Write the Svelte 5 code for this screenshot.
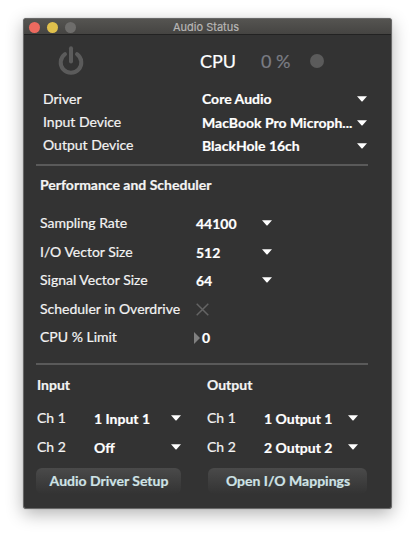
<script lang="ts">
  const devices = [
    { label: 'Driver', value: 'Core Audio' },
    { label: 'Input Device', value: 'MacBook Pro Microph...' },
    { label: 'Output Device', value: 'BlackHole 16ch' },
  ]

  const settings = [
    { label: 'Sampling Rate', value: '44100' },
    { label: 'I/O Vector Size', value: '512' },
    { label: 'Signal Vector Size', value: '64' },
  ]

  const groups = [
    {
      title: 'Input',
      channels: ['1 Input 1', 'Off'],
      action: 'Audio Driver Setup',
    },
    {
      title: 'Output',
      channels: ['1 Output 1', '2 Output 2'],
      action: 'Open I/O Mappings',
    },
  ]
</script>

{#snippet arrow()}
  <svg class="arrow" width="10" height="6" viewBox="0 0 10 6"
    ><path d="M0 0.3H10L5.6 5.3Q5 5.8 4.4 5.3Z" fill="#fff" /></svg
  >
{/snippet}

<div class="desktop">
  <main class="window">
    <header>
      <div class="lights">
        <span class="close"></span>
        <span class="minimise"></span>
        <span class="zoom"></span>
      </div>
      <h1>Audio Status</h1>
    </header>

    <div class="status">
      <svg
        class="power"
        width="26"
        height="30"
        viewBox="0 0 26 30"
        fill="none"
        stroke="#5b5b5b"
        stroke-width="4"
        stroke-linecap="round"
        ><path d="M7 8.2A10.3 10.3 0 1 0 19 8.2" /><path d="M13 2.2V15.6" /></svg
      >
      <span class="cpu">CPU</span>
      <span class="load">0 %</span>
      <span class="dot"></span>
    </div>

    <section class="devices">
      {#each devices as device}
        <div class="row">
          <span class="label">{device.label}</span>
          <span class="value">{device.value}</span>
          {@render arrow()}
        </div>
      {/each}
    </section>

    <hr />

    <section class="scheduler">
      <h2>Performance and Scheduler</h2>
      {#each settings as setting}
        <div class="row">
          <span class="label">{setting.label}</span>
          <span class="value">{setting.value}</span>
          {@render arrow()}
        </div>
      {/each}
      <div class="row">
        <span class="label">Scheduler in Overdrive</span>
        <svg
          class="cross"
          width="13"
          height="13"
          viewBox="0 0 13 13"
          stroke="#646464"
          stroke-width="1.5"><path d="M0.7 0.7L12.3 12.3M12.3 0.7L0.7 12.3" /></svg
        >
      </div>
      <div class="row">
        <span class="label">CPU % Limit</span>
        <span class="value limit"
          ><svg width="6" height="12" viewBox="0 0 6 12"
            ><path d="M0 0L6 6L0 12Z" fill="#808080" /></svg
          >0</span
        >
      </div>
    </section>

    <hr />

    <div class="groups">
      {#each groups as group}
        <section class="group">
          <h2>{group.title}</h2>
          {#each group.channels as channel, i}
            <div class="row">
              <span class="label">Ch {i + 1}</span>
              <span class="value">{channel}</span>
              {@render arrow()}
            </div>
          {/each}
          <button type="button">{group.action}</button>
        </section>
      {/each}
    </div>
  </main>
</div>

<style>
  .desktop {
    box-sizing: border-box;
    height: 535px;
    padding: 18px 0 0 22.5px;
    overflow: hidden;
    background: #fff;
  }
  .window {
    box-sizing: border-box;
    width: 369px;
    height: 491px;
    overflow: hidden;
    border: 1px solid #686868;
    border-radius: 3px;
    background: #333;
    box-shadow:
      0 0 1px rgba(0, 0, 0, 0.45),
      0 5px 17px rgba(0, 0, 0, 0.3);
    color: #f4f4f4;
    font-family: Lato, 'Liberation Sans', sans-serif;
    font-size: 14px;
    line-height: 20px;
    white-space: nowrap;
    -webkit-text-stroke: 0.2px;
  }
  header {
    display: grid;
    grid-template-columns: 67px 1fr 69px;
    align-items: center;
    box-sizing: border-box;
    height: 16px;
    border-bottom: 1px solid #222;
    background: linear-gradient(#555451, #454442);
  }
  .lights {
    display: flex;
    gap: 7px;
    padding-left: 5.5px;
  }
  .lights span {
    width: 11px;
    height: 11px;
    border-radius: 50%;
  }
  .close {
    background: #ed6a5f;
  }
  .minimise {
    background: #e0c04c;
  }
  .zoom {
    background: #6e6d6b;
  }
  h1 {
    margin: 0;
    padding-top: 1px;
    color: #b7b6b5;
    font-family: Inter, sans-serif;
    font-size: 11px;
    font-weight: 400;
    line-height: 15px;
    text-align: center;
  }

  .status {
    display: flex;
    align-items: center;
    height: 52.5px;
    padding-left: 34.5px;
  }
  .power {
    margin-right: 116px;
  }
  .cpu,
  .load {
    font-size: 18px;
  }
  .cpu {
    width: 61px;
    color: #fff;
  }
  .load {
    width: 49px;
    color: #7b7d84;
  }
  .dot {
    width: 14px;
    height: 14px;
    border-radius: 50%;
    background: #5b5b5b;
  }

  .row {
    display: grid;
    align-items: center;
  }
  .value {
    color: #fff;
    font-weight: 700;
  }
  .devices .row {
    grid-template-columns: 159px 155px auto;
    justify-content: start;
    height: 23.4px;
    padding-left: 19.5px;
  }
  .devices .row + .row .label {
    padding-bottom: 1px;
  }
  hr {
    width: 332px;
    height: 2px;
    margin: 0 0 0 12.5px;
    border: 0;
    background: #5a5a5a;
  }
  .devices + hr {
    margin-top: 6.3px;
  }
  h2 {
    margin: 0;
    font-size: 14px;
    font-weight: 700;
    line-height: 20px;
  }

  .scheduler {
    height: 197px;
    padding-left: 16.5px;
  }
  .scheduler h2 {
    padding: 9px 0 14px;
  }
  .scheduler .row {
    grid-template-columns: 156px 65.5px auto;
    justify-content: start;
    height: 28.5px;
  }
  .scheduler .value,
  .group .value {
    padding-top: 2px;
  }
  .cross {
    margin-top: 1px;
  }
  .limit {
    display: flex;
    align-items: center;
    gap: 2px;
    margin-left: -2px;
  }

  .groups {
    display: grid;
    grid-template-columns: 170px 1fr;
    padding-left: 13.5px;
  }
  .group h2 {
    padding: 10px 0 9px;
  }
  .group .row {
    grid-template-columns: 57px 77px auto;
    justify-content: start;
    height: 28.5px;
  }
  .group:last-child .row {
    grid-template-columns: 57px 84px auto;
  }
  button {
    width: 145px;
    height: 26px;
    margin: 7px 0 0 -1px;
    padding: 0 0 0 1px;
    border: 0;
    border-radius: 6px;
    background: linear-gradient(#4a4a4a, #333);
    color: #cfe3e6;
    font: inherit;
    font-weight: 700;
  }
  .group:last-child button {
    width: 159px;
    margin-left: 1px;
  }
</style>
